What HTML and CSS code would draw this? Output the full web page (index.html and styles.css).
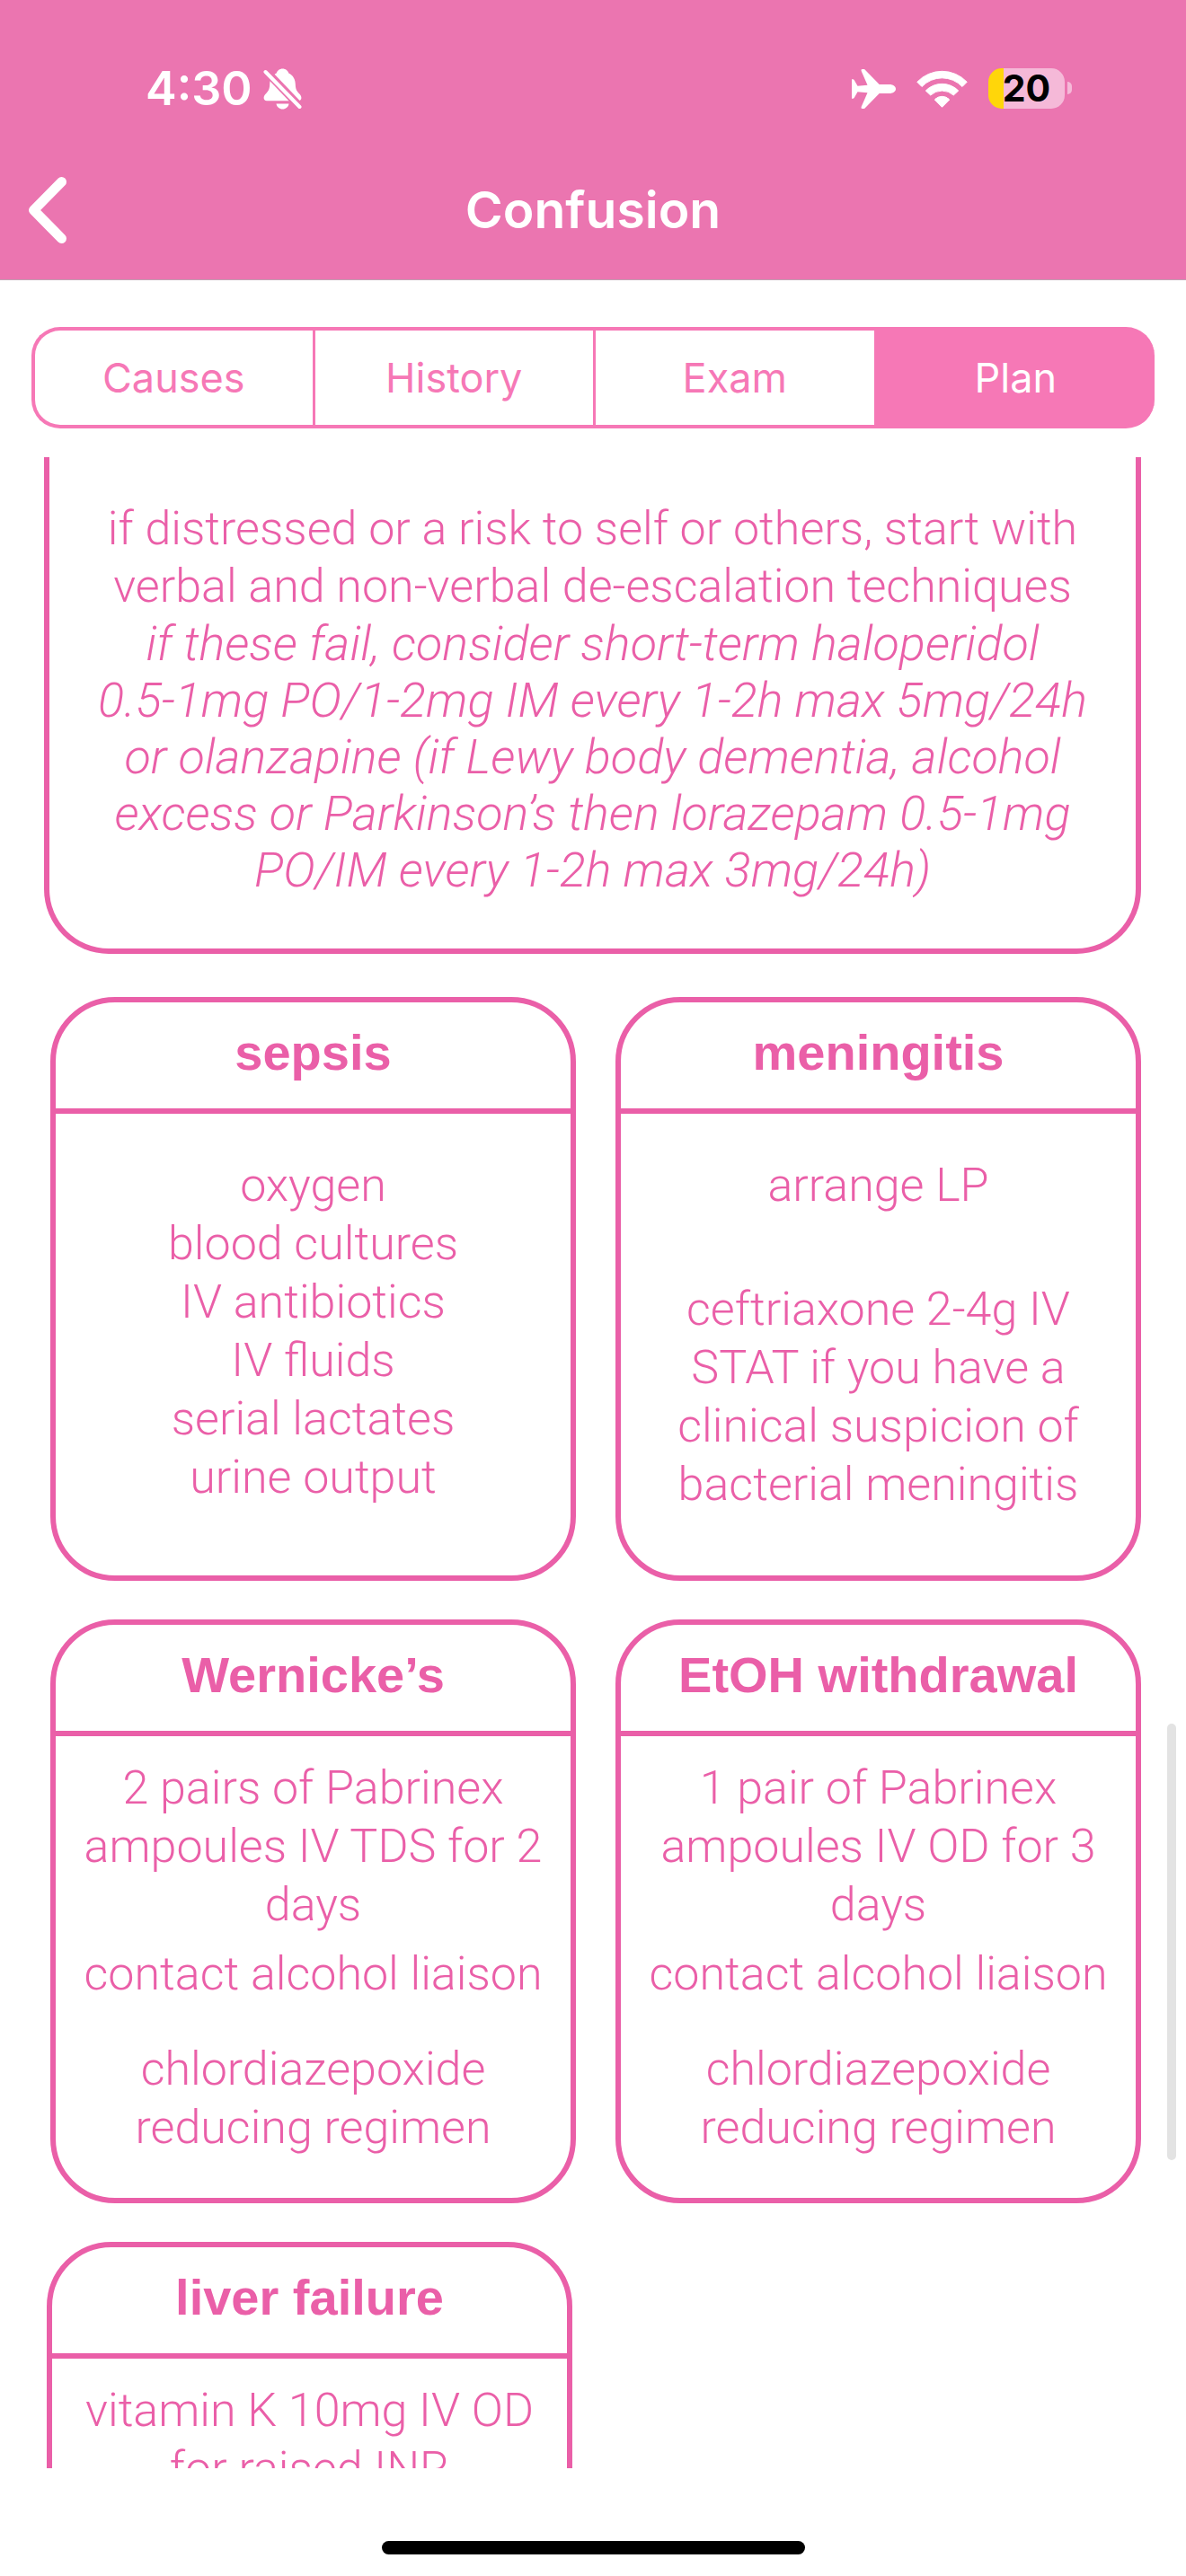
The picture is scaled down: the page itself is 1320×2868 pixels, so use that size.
FILE: index.html
```html
<!DOCTYPE html>
<html lang="en">
<head>
<meta charset="utf-8">
<meta name="viewport" content="width=device-width, initial-scale=1">
<title>Confusion</title>
<link rel="stylesheet" href="styles.css">
</head>
<body>
<div class="app">
  <header class="header">
    <div class="status">
      <div class="status-group">
        <span class="time">4:30</span>
        <svg class="icon" width="43" height="46" viewBox="0 0 43 46" aria-hidden="true">
          <path fill="#fff" d="M21.5.5c-3.400 0-6 2.200-6.800 5C9.500 8 7.300 12.500 7.200 18c-.1 5-1.500 7.500-4 10C1.400 29.800.6 31.300.6 33c0 2 1.200 3.200 3.400 3.200h35c2.200 0 3.400-1.200 3.400-3.200 0-1.700-.8-3.200-2.600-5-2.500-2.500-3.900-5-4-10-.1-5.500-2.300-10-7.500-12.500-.8-2.800-3.400-5-6.800-5z"/>
          <path fill="#fff" d="M14.500 39.500h14c-.5 3.500-3.500 6-7 6s-6.500-2.500-7-6z"/>
          <path stroke="#eb75b0" stroke-width="9" d="M-1-1 44 46"/>
          <path stroke="#fff" stroke-width="4" stroke-linecap="round" d="M2.500 4 40.500 43"/>
        </svg>
      </div>
      <div class="status-group status-right">
        <svg class="icon" width="49" height="44" viewBox="0 0 49 44" aria-hidden="true">
          <path fill="#fff" d="M0 11.300h1.200q1 0 1.600 1l3.700 6.400 11-1L10.600 2q-.7-2 1.200-2h1.500q1.100 0 2 1.200L30.700 17H42c4 0 7 2.200 7 5s-3 5-7 5H30.700L15.300 42.800q-.9 1.200-2 1.200h-1.500q-1.900 0-1.200-2l6.900-15.700-11-1-3.700 6.400q-.6 1-1.600 1H0z"/>
        </svg>
        <svg class="icon" width="57" height="42" viewBox="0 0 57 42" aria-hidden="true">
          <g fill="#fff" stroke="#fff" stroke-width="1" stroke-linejoin="round">
            <path d="M.8 13.300A38 38 0 0 1 56.200 13.300L51 18.500A31 31 0 0 0 6 18.500z"/>
            <path d="M10.300 23A25.500 25.500 0 0 1 46.700 23L41.300 28A19 19 0 0 0 15.700 28z"/>
            <path d="M20.300 33A11 11 0 0 1 36.700 33L28.500 41.300z"/>
          </g>
        </svg>
        <div class="battery"><span class="battery-level">20</span></div>
      </div>
    </div>
    <nav class="nav">
      <button class="back" type="button" aria-label="Back">
        <svg class="icon" width="43" height="74" viewBox="0 0 43 74" aria-hidden="true">
          <path fill="none" stroke="#fff" stroke-width="11" stroke-linecap="round" stroke-linejoin="round" d="M37.500 5.500 6.500 37l31 31.500"/>
        </svg>
      </button>
      <h1 class="title">Confusion</h1>
    </nav>
  </header>

  <div class="tabs" role="tablist">
    <button class="tab" type="button" role="tab">Causes</button>
    <button class="tab" type="button" role="tab">History</button>
    <button class="tab" type="button" role="tab">Exam</button>
    <button class="tab tab-active" type="button" role="tab" aria-selected="true">Plan</button>
  </div>

  <div class="viewport">
    <main class="content">
      <section class="intro">
        <p>if distressed or a risk to self or others, start with<br>verbal and non-verbal de-escalation techniques</p>
        <p class="drug">if these fail, consider short-term haloperidol<br>0.5-1mg PO/1-2mg IM every 1-2h max 5mg/24h<br>or olanzapine (if Lewy body dementia, alcohol<br>excess or Parkinson’s then lorazepam 0.5-1mg<br>PO/IM every 1-2h max 3mg/24h)</p>
      </section>

      <div class="row">
        <section class="card">
          <h2 class="card-title">sepsis</h2>
          <div class="card-body card-body-roomy">
            <p>oxygen<br>blood cultures<br>IV antibiotics<br>IV fluids<br>serial lactates<br>urine output</p>
          </div>
        </section>
        <section class="card">
          <h2 class="card-title">meningitis</h2>
          <div class="card-body card-body-roomy">
            <p>arrange LP</p>
            <p class="gap-large">ceftriaxone 2-4g IV<br>STAT if you have a<br>clinical suspicion of<br>bacterial meningitis</p>
          </div>
        </section>
      </div>

      <div class="row">
        <section class="card">
          <h2 class="card-title">Wernicke’s</h2>
          <div class="card-body">
            <p>2 pairs of Pabrinex<br>ampoules IV TDS for 2<br>days</p>
            <p class="gap-small">contact alcohol liaison</p>
            <p class="gap-medium">chlordiazepoxide<br>reducing regimen</p>
          </div>
        </section>
        <section class="card">
          <h2 class="card-title">EtOH withdrawal</h2>
          <div class="card-body">
            <p>1 pair of Pabrinex<br>ampoules IV OD for 3<br>days</p>
            <p class="gap-small">contact alcohol liaison</p>
            <p class="gap-medium">chlordiazepoxide<br>reducing regimen</p>
          </div>
        </section>
      </div>

      <div class="row row-single">
        <section class="card">
          <h2 class="card-title">liver failure</h2>
          <div class="card-body">
            <p>vitamin K 10mg IV OD<br>for raised INR</p>
          </div>
        </section>
      </div>
    </main>
    <div class="scroll-thumb"></div>
  </div>

  <footer class="home"><div class="home-bar"></div></footer>
</div>
</body>
</html>
```
FILE: styles.css
```css
:root {
  --bar: #eb75b0;
  --tab: #f678b6;
  --ink: #ea5fa8;
}

* { box-sizing: border-box; }

body {
  margin: 0;
  background: #fff;
  font-family: "Liberation Sans", Arial, sans-serif;
}

h1, h2, p { margin: 0; }

button {
  padding: 0;
  border: 0;
  background: none;
  font: inherit;
  color: inherit;
}

.icon { display: block; overflow: hidden; }

.app {
  display: flex;
  flex-direction: column;
  height: 100vh;
}

/* Header */
.header {
  flex: none;
  padding-bottom: 40px;
  border-bottom: 1px solid #c0a3b2;
  background: var(--bar);
  color: #fff;
  font-family: Inter, sans-serif;
}

.status {
  display: flex;
  align-items: center;
  justify-content: space-between;
  height: 197px;
  padding: 0 135px 0 162px;
}

.status-group {
  display: flex;
  align-items: center;
  gap: 12px;
}

.status-right { gap: 23px; }

.time {
  font-size: 52px;
  font-weight: 600;
  line-height: 64px;
}

.battery {
  position: relative;
  width: 85px;
  height: 45px;
  border-radius: 15px;
  background: linear-gradient(to right, #ffd60a 17px, #f5b9d8 17px);
  color: #000;
  font-size: 41px;
  font-weight: 700;
  line-height: 45px;
  text-align: center;
}

.battery::after {
  content: "";
  position: absolute;
  top: 15px;
  right: -8px;
  width: 5px;
  height: 14px;
  border-radius: 0 5px 5px 0;
  background: #f5b9d8;
}

.nav {
  display: grid;
  grid-template-columns: 1fr auto 1fr;
  align-items: center;
  height: 74px;
  padding: 0 31px;
}

.back { justify-self: start; }

.title {
  font-size: 57px;
  font-weight: 600;
  line-height: 72px;
}

/* Segmented tabs */
.tabs {
  flex: none;
  display: grid;
  grid-template-columns: repeat(4, 1fr);
  height: 113px;
  margin: 52px 35px 32px;
  color: var(--tab);
  font-family: Inter, sans-serif;
  font-size: 45px;
}

.tab {
  border: 4px solid var(--tab);
  border-width: 4px 0 4px 3px;
  background: #fff;
}

.tab:first-child {
  border-left-width: 4px;
  border-radius: 32px 0 0 32px;
}

.tab:last-child { border-radius: 0 32px 32px 0; }

.tab-active {
  background: var(--tab);
  color: #fff;
}

/* Scrolling content */
.viewport {
  position: relative;
  flex: 1;
  min-height: 0;
}

.content {
  height: 100%;
  overflow-y: auto;
  scrollbar-width: none;
  color: var(--ink);
  font-family: Roboto, "Liberation Sans", sans-serif;
  font-size: 52px;
  font-weight: 300;
  line-height: 65px;
  text-align: center;
}

.scroll-thumb {
  position: absolute;
  top: 1410px;
  right: 11px;
  width: 10px;
  height: 486px;
  border-radius: 5px;
  background: #e3e3e3;
}

.intro {
  margin: 0 50px 48px 49px;
  padding: 48px 0 56px;
  border: 6px solid var(--ink);
  border-top: 0;
  border-radius: 0 0 72px 72px;
  line-height: 64px;
}

.drug {
  font-size: 54px;
  font-style: italic;
  line-height: 63px;
}

.row {
  display: grid;
  grid-template-columns: 1fr 1fr;
  gap: 44px;
  margin: 0 50px 43px 56px;
}

.row-single { margin: 0 54px 43px 52px; }

.card {
  border: 6px solid var(--ink);
  border-radius: 72px;
}

.card-title {
  padding-bottom: 6px;
  border-bottom: 6px solid var(--ink);
  font-family: "Liberation Sans", Arial, sans-serif;
  font-size: 56px;
  font-weight: 700;
  line-height: 112px;
}

.card-body { padding: 25px 0 46px; }
.card-body-roomy { padding: 47px 0 69px; }

.gap-small { margin-top: 12px; }
.gap-medium { margin-top: 41px; }
.gap-large { margin-top: 73px; }

/* Home indicator */
.home {
  flex: none;
  display: flex;
  align-items: flex-end;
  justify-content: center;
  height: 120px;
  padding-bottom: 24px;
}

.home-bar {
  width: 471px;
  height: 15px;
  border-radius: 8px;
  background: #000;
}
```
